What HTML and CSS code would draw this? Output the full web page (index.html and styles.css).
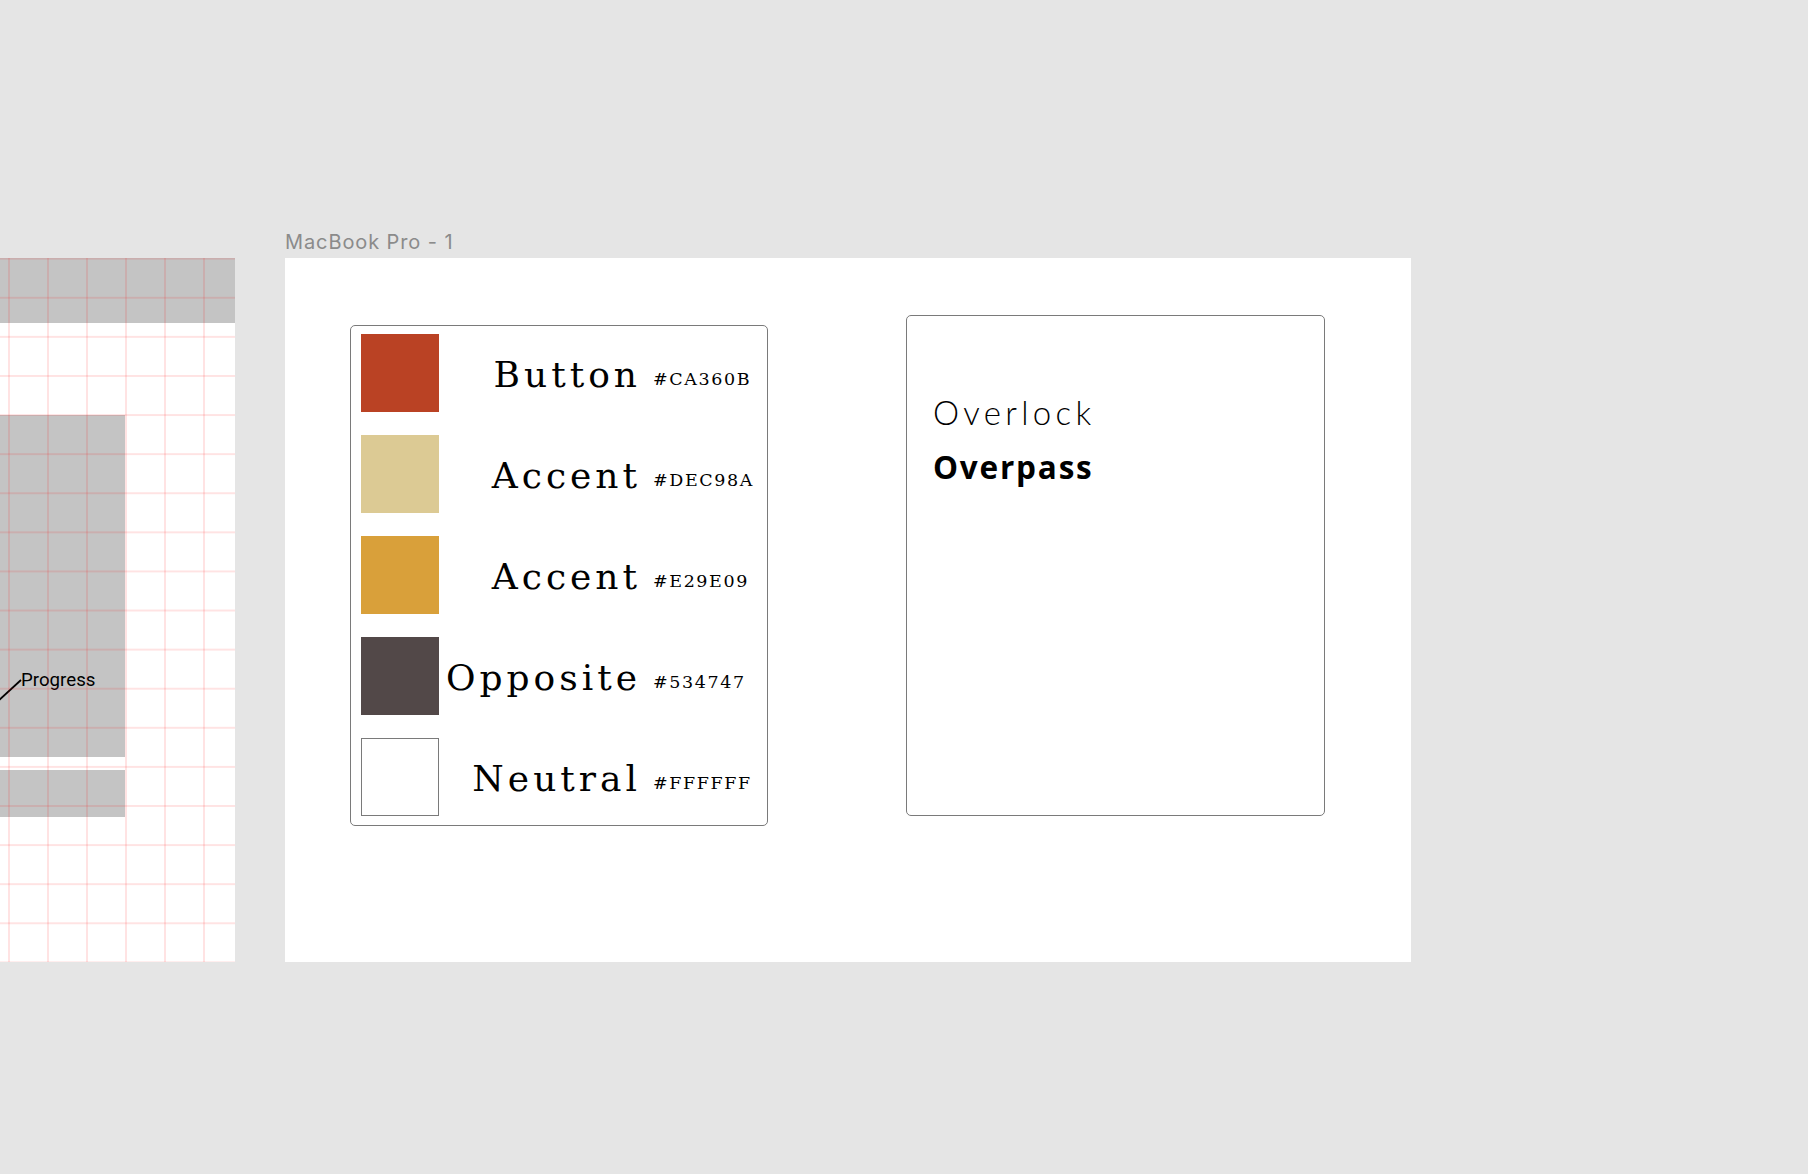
FILE: index.html
```html
<!DOCTYPE html>
<html lang="en">
<head>
<meta charset="utf-8">
<title>MacBook Pro - 1</title>
<link rel="stylesheet" href="styles.css">
</head>
<body>
<div class="canvas">
  <div class="frame-label">MacBook Pro - 1</div>

  <div class="side-frame">
    <div class="side-header"></div>
    <div class="side-block tall">
      <div class="callout">
        <svg class="callout-line" width="22" height="22" viewBox="0 0 22 22"><line x1="-2" y1="22" x2="21" y2="1" stroke="#000" stroke-width="1.8"/></svg>
        <span class="callout-text">Progress</span>
      </div>
    </div>
    <div class="side-block short"></div>
    <div class="grid-overlay"></div>
  </div>

  <div class="frame">
    <div class="palette-card">
      <div class="swatch-row">
        <div class="swatch sw-button"></div>
        <div class="swatch-name">Button</div>
        <div class="swatch-hex">#CA360B</div>
      </div>
      <div class="swatch-row">
        <div class="swatch sw-accent1"></div>
        <div class="swatch-name">Accent</div>
        <div class="swatch-hex">#DEC98A</div>
      </div>
      <div class="swatch-row">
        <div class="swatch sw-accent2"></div>
        <div class="swatch-name">Accent</div>
        <div class="swatch-hex">#E29E09</div>
      </div>
      <div class="swatch-row">
        <div class="swatch sw-opposite"></div>
        <div class="swatch-name">Opposite</div>
        <div class="swatch-hex">#534747</div>
      </div>
      <div class="swatch-row">
        <div class="swatch sw-neutral"></div>
        <div class="swatch-name">Neutral</div>
        <div class="swatch-hex">#FFFFFF</div>
      </div>
    </div>

    <div class="font-card">
      <p class="font-sample overlock">Overlock</p>
      <p class="font-sample overpass">Overpass</p>
    </div>
  </div>
</div>
</body>
</html>
```

FILE: styles.css
```css
html, body {
  margin: 0;
  padding: 0;
}

body {
  background: #e5e5e5;
  width: 1808px;
  height: 1174px;
  overflow: hidden;
}

.canvas {
  display: grid;
  grid-template-columns: 235px 1126px;
  grid-template-rows: 24px 704px;
  column-gap: 50px;
  row-gap: 4px;
  padding-top: 230px;
}

.frame-label {
  grid-column: 2;
  grid-row: 1;
  font-family: Inter, "Liberation Sans", sans-serif;
  font-size: 20px;
  line-height: 24px;
  letter-spacing: 0.9px;
  color: #8b8b8b;
  white-space: nowrap;
}

/* left, partially visible frame */
.side-frame {
  grid-column: 1;
  grid-row: 2;
  position: relative;
  background: #ffffff;
  display: flex;
  flex-direction: column;
  align-items: flex-start;
  overflow: hidden;
}

.side-header {
  align-self: stretch;
  height: 65px;
  background: #c4c4c4;
}

.side-block {
  width: 125px;
  background: #c4c4c4;
}

.side-block.tall {
  margin-top: 92px;
  height: 342px;
  box-sizing: border-box;
  padding-top: 255px;
}

.side-block.short {
  margin-top: 13px;
  height: 47px;
}

.callout {
  display: flex;
  align-items: flex-start;
}

.callout-line {
  flex: none;
  margin-top: 9px;
}

.callout-text {
  font-family: Roboto, "Liberation Sans", sans-serif;
  font-size: 18.7px;
  line-height: 21px;
  color: #000;
  margin-left: -1px;
}

.grid-overlay {
  position: absolute;
  inset: 0;
  pointer-events: none;
  background-image:
    linear-gradient(to right, rgba(255, 0, 0, 0.11) 2px, transparent 2px),
    linear-gradient(to bottom, rgba(255, 0, 0, 0.11) 2px, transparent 2px);
  background-size: 39px 100%, 100% 39.1px;
  background-position: 8px 0, 0 38.8px;
}

/* main frame */
.frame {
  grid-column: 2;
  grid-row: 2;
  background: #ffffff;
  display: flex;
  align-items: flex-start;
  gap: 138px;
  padding: 57px 0 0 65px;
}

.palette-card {
  width: 418px;
  box-sizing: border-box;
  margin-top: 10px;
  border: 1px solid #7a7a7a;
  border-radius: 5px;
  padding: 8px 0 9px 10px;
  display: flex;
  flex-direction: column;
  gap: 23px;
}

.swatch-row {
  display: flex;
  align-items: center;
  height: 78px;
}

.swatch {
  flex: none;
  width: 78px;
  height: 78px;
  box-sizing: border-box;
}

.sw-button { background: #ba4224; }
.sw-accent1 { background: #dcca94; }
.sw-accent2 { background: #d9a03a; }
.sw-opposite { background: #524848; }
.sw-neutral { background: #ffffff; border: 1px solid #7a7a7a; }

.swatch-name {
  flex: 1;
  text-align: right;
  font-family: "DejaVu Serif", "Liberation Serif", serif;
  font-size: 36px;
  line-height: 42px;
  letter-spacing: 4px;
  color: #000;
  margin-right: 12px;
  padding-top: 3px;
  white-space: nowrap;
}

.swatch-hex {
  flex: none;
  width: 114px;
  box-sizing: border-box;
  padding-top: 12px;
  font-family: "DejaVu Serif", "Liberation Serif", serif;
  font-size: 17.5px;
  line-height: 20px;
  letter-spacing: 1.6px;
  color: #000;
  white-space: nowrap;
}

.font-card {
  width: 419px;
  height: 501px;
  box-sizing: border-box;
  border: 1px solid #7a7a7a;
  border-radius: 5px;
  padding: 76px 0 0 26px;
}

.font-sample {
  margin: 0;
  color: #000;
  white-space: nowrap;
  line-height: 40px;
}

.overlock {
  font-family: Lato, "Noto Sans", sans-serif;
  font-weight: 300;
  font-size: 33px;
  letter-spacing: 4.3px;
}

.overpass {
  margin-top: 15px;
  font-family: "Open Sans", "Noto Sans", sans-serif;
  font-weight: 700;
  font-size: 31.5px;
  letter-spacing: 1.8px;
}
```
